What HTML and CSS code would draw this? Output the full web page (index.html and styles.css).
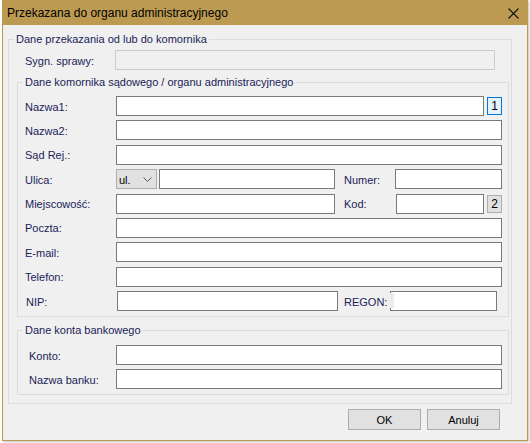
FILE: index.html
```html
<!DOCTYPE html>
<html lang="pl">
<head>
<meta charset="utf-8">
<title>Przekazana do organu administracyjnego</title>
<link rel="stylesheet" href="styles.css">
</head>
<body>
<div class="window">
  <div class="titlebar">
    <span class="title">Przekazana do organu administracyjnego</span>
    <svg class="close" width="11" height="11" viewBox="0 0 11 11"><path d="M0.5 0.5 L10.5 10.5 M10.5 0.5 L0.5 10.5" stroke="#111" stroke-width="1.1" fill="none"/></svg>
  </div>
  <div class="client">
    <fieldset class="grp outer">
      <legend>Dane przekazania od lub do komornika</legend>
      <div class="row sygn">
        <label class="lbl w90">Sygn. sprawy:</label>
        <input class="edit disabled w380" type="text" disabled>
      </div>

      <fieldset class="grp inner">
        <legend>Dane komornika sądowego / organu administracyjnego</legend>
        <div class="rows inner-rows">
          <div class="row">
            <label class="lbl w91">Nazwa1:</label>
            <input class="edit w368" type="text">
            <button class="sq sq-active">1</button>
          </div>
          <div class="row">
            <label class="lbl w91">Nazwa2:</label>
            <input class="edit w386" type="text">
          </div>
          <div class="row">
            <label class="lbl w91">Sąd Rej.:</label>
            <input class="edit w386" type="text">
          </div>
          <div class="row">
            <label class="lbl w91">Ulica:</label>
            <div class="combo">
              <span>ul.</span>
              <svg class="chev" width="9" height="5" viewBox="0 0 9 5"><path d="M0.5 0.5 L4.5 4.5 L8.5 0.5" stroke="#555" stroke-width="1" fill="none"/></svg>
            </div>
            <input class="edit w176 ml2" type="text">
            <label class="lbl w51 ml9">Numer:</label>
            <input class="edit w107" type="text">
          </div>
          <div class="row">
            <label class="lbl w91">Miejscowość:</label>
            <input class="edit w219" type="text">
            <label class="lbl w52 ml9">Kod:</label>
            <input class="edit w88" type="text">
            <button class="sq">2</button>
          </div>
          <div class="row">
            <label class="lbl w91">Poczta:</label>
            <input class="edit w386" type="text">
          </div>
          <div class="row">
            <label class="lbl w91">E-mail:</label>
            <input class="edit w386" type="text">
          </div>
          <div class="row">
            <label class="lbl w91">Telefon:</label>
            <input class="edit w386" type="text">
          </div>
          <div class="row">
            <label class="lbl w92 pl1">NIP:</label>
            <input class="edit w221" type="text">
            <label class="lbl w46 ml6">REGON:</label>
            <span class="regon-wrap">
              <input class="edit w107" type="text">
              <span class="regon-mask"></span>
            </span>
          </div>
        </div>
      </fieldset>

      <fieldset class="grp bank">
        <legend>Dane konta bankowego</legend>
        <div class="rows bank-rows">
          <div class="row">
            <label class="lbl w87 pl11">Konto:</label>
            <input class="edit w386" type="text">
          </div>
          <div class="row">
            <label class="lbl w87 pl11">Nazwa banku:</label>
            <input class="edit w386" type="text">
          </div>
        </div>
      </fieldset>
    </fieldset>

    <div class="buttons">
      <button class="btn">OK</button>
      <button class="btn">Anuluj</button>
    </div>
  </div>
</div>
</body>
</html>
```

FILE: styles.css
```css
* { box-sizing: border-box; }

html, body {
  margin: 0;
  padding: 0;
  background: #ffffff;
  width: 530px;
  height: 443px;
  overflow: hidden;
  font-family: "Liberation Sans", Arial, sans-serif;
  font-size: 11px;
}

.window {
  margin-left: 2px;
  width: 526px;
  height: 441px;
  border-left: 1px solid #bd9a52;
  border-right: 1px solid #bd9a52;
  border-bottom: 1px solid #bd9a52;
  background: #f0f0f0;
  box-shadow: 1px 1px 2px rgba(0, 0, 0, 0.25);
  display: flex;
  flex-direction: column;
}

.titlebar {
  height: 25px;
  margin: 0 -1px;
  background: #bd9a52;
  display: flex;
  align-items: center;
  justify-content: space-between;
  padding: 0 9px 0 5px;
  flex: none;
}

.title {
  font-size: 12px;
  color: #000;
  line-height: 14px;
  padding-top: 1px;
}

.close { display: block; margin-top: 1px; }

.client {
  flex: 1;
  background: #f0f0f0;
  padding: 7px 0 0 5px;
  display: flex;
  flex-direction: column;
}

.grp {
  margin: 0;
  padding: 0;
  border: 1px solid #dcdcdc;
  min-width: 0;
}

.grp > legend {
  margin-left: 5px;
  padding: 0 2px;
  line-height: 14px;
  font-size: 11px;
  color: #1a2358;
}

.outer {
  width: 504px;
  height: 372px;
}

.row {
  display: flex;
  align-items: center;
  height: 20px;
}

.sygn {
  margin: 4px 0 0 16px;
}

.inner {
  margin: 5px 0 0 8px;
  width: 492px;
  height: 242px;
}

.rows {
  display: flex;
  flex-direction: column;
  gap: 4.4px;
}

.inner-rows {
  padding: 7px 6px 0 7px;
}

.bank {
  margin: 6px 0 0 8px;
  width: 492px;
  height: 72px;
}

.bank-rows {
  gap: 4px;
  padding: 8px 6px 0 0;
}

.lbl {
  color: #1a2358;
  font-size: 11px;
  white-space: nowrap;
  flex: none;
  padding-top: 1px;
}

.edit {
  height: 20px;
  margin: 0;
  padding: 0 2px;
  border: 1px solid #7a7a7a;
  background: #ffffff;
  font: inherit;
  flex: none;
  outline: none;
}

.edit.disabled {
  border-color: #cccccc;
  background: #f0f0f0;
}

.w46 { width: 46px; }
.w51 { width: 51px; }
.w52 { width: 52px; }
.w87 { width: 98px; }
.w88 { width: 88px; }
.w90 { width: 90px; }
.w91 { width: 91px; }
.w92 { width: 92px; }
.w107 { width: 107px; }
.w176 { width: 176px; }
.w219 { width: 219px; }
.w221 { width: 221px; }
.w368 { width: 368px; }
.w380 { width: 380px; }
.w386 { width: 386px; }

.ml2 { margin-left: 2px; }
.ml6 { margin-left: 6px; }
.ml9 { margin-left: 9px; }
.pl1 { padding-left: 1px; }
.pl11 { padding-left: 11px; }

.sq {
  width: 15px;
  height: 18px;
  margin: 0 0 0 3px;
  padding: 0;
  border: 1px solid #adadad;
  background: #e1e1e1;
  font-family: "Liberation Sans", Arial, sans-serif;
  font-size: 12px;
  color: #000;
  line-height: 16px;
  flex: none;
}

.sq-active {
  border-color: #0078d7;
  background: #e5f1fb;
}

.combo {
  width: 41px;
  height: 20px;
  border: 1px solid #adadad;
  background: #e1e1e1;
  display: flex;
  align-items: center;
  justify-content: space-between;
  padding: 0 4px 0 2px;
  color: #000;
  flex: none;
}

.combo span { padding-top: 1px; }
.chev { display: block; }

.regon-wrap {
  position: relative;
  display: block;
  flex: none;
  height: 20px;
}

.regon-mask {
  position: absolute;
  left: 0;
  top: 2px;
  width: 4px;
  height: 15px;
  background: #ececec;
}

.buttons {
  display: flex;
  justify-content: flex-end;
  gap: 6px;
  margin: 5px 27px 0 0;
}

.btn {
  width: 73px;
  height: 21px;
  margin: 0;
  padding: 0;
  border: 1px solid #adadad;
  background: #e1e1e1;
  font-family: "Liberation Sans", Arial, sans-serif;
  font-size: 11px;
  color: #000;
}
```
